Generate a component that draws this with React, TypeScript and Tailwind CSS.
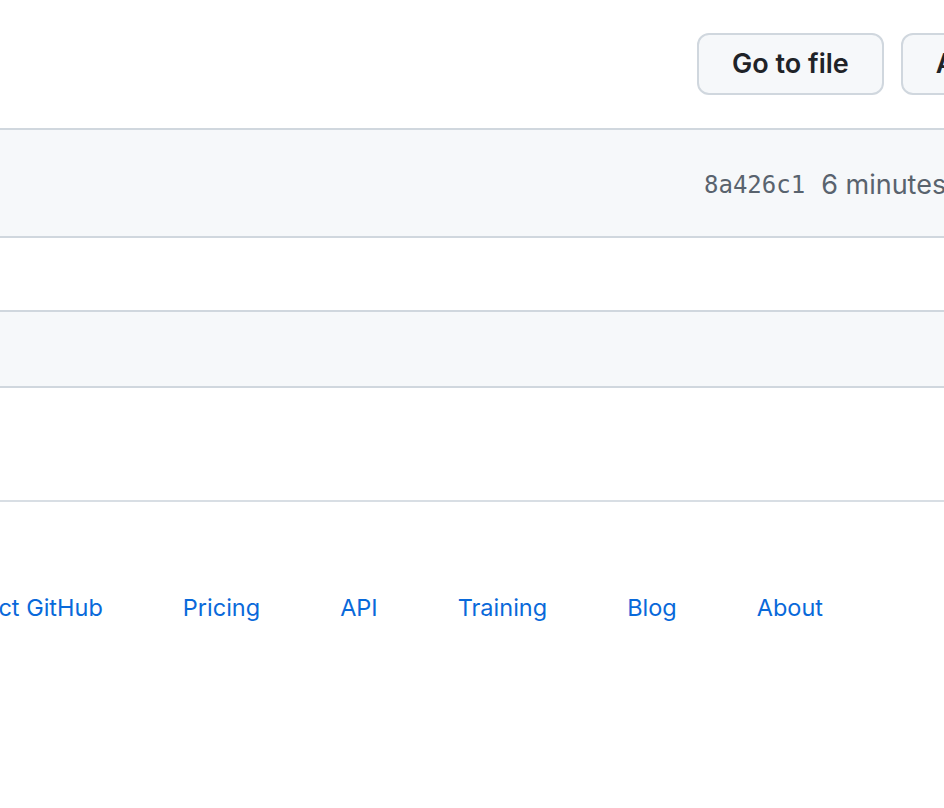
const links = ["Contact GitHub", "Pricing", "API", "Training", "Blog", "About"];

const Button = ({ label }: { label: string }) => (
  <button className="h-[62px] shrink-0 rounded-[12px] border-2 border-[#d0d7de] bg-[#f6f8fa] px-[33px] text-[27px] font-semibold text-[#1f2328]">
    {label}
  </button>
);

export default function App() {
  return (
    <div className="h-[808px] w-[944px] overflow-hidden bg-white font-['Inter',sans-serif]">
      <div className="flex h-[128px] items-center gap-[17px] pl-[697px]">
        <Button label="Go to file" />
        <Button label="Add file" />
      </div>

      <div className="border-t-2 border-[#d0d7de]">
        <div className="flex h-[106px] items-center bg-[#f6f8fa] pt-[4px]">
          <div className="flex w-full items-center gap-[16px] whitespace-nowrap pl-[704px]">
            <span className="font-['DejaVu_Sans_Mono',monospace] text-[24px] text-[#59636e]">8a426c1</span>
            <span className="text-[27px] text-[#59636e]">6 minutes ago</span>
          </div>
        </div>
        <div className="h-[74px] border-t-2 border-[#d0d7de]" />
        <div className="h-[76px] border-t-2 border-[#d0d7de] bg-[#f6f8fa]" />
        <div className="h-[114px] border-t-2 border-[#d0d7de]" />
      </div>

      <footer className="border-t-2 border-[#d8dee4]">
        <div className="flex h-[210px] items-center justify-end gap-[80px] whitespace-nowrap pr-[121px] pt-[2px]">
          {links.map((l) => (
            <a key={l} href="#" className="text-[23.5px] text-[#0969da]">
              {l}
            </a>
          ))}
        </div>
      </footer>
    </div>
  );
}
